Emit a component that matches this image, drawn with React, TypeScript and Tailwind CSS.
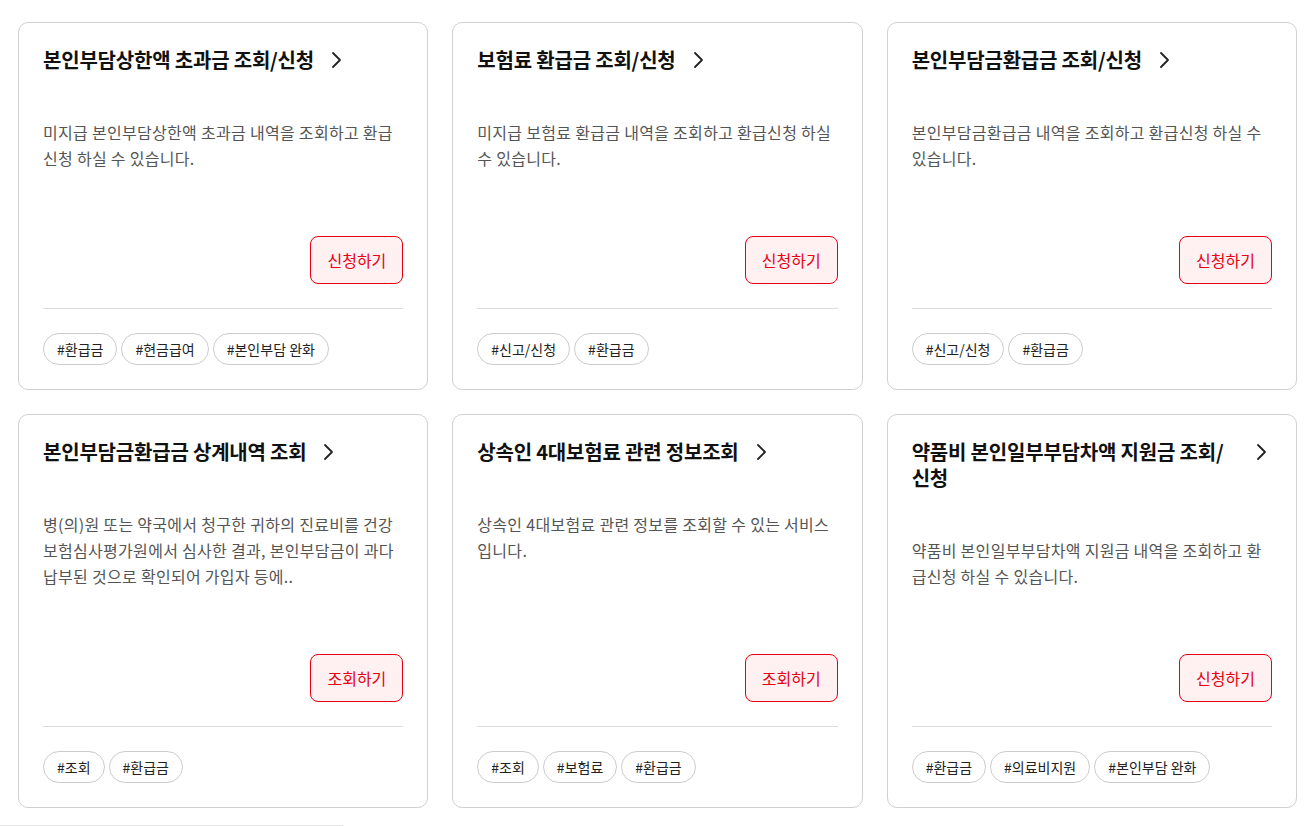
import React from 'react';

type Card = {
  title: string;
  desc: string;
  action: string;
  tags: string[];
};

const cards: Card[] = [
  {
    title: '본인부담상한액 초과금 조회/신청',
    desc: '미지급 본인부담상한액 초과금 내역을 조회하고 환급신청 하실 수 있습니다.',
    action: '신청하기',
    tags: ['#환급금', '#현금급여', '#본인부담 완화'],
  },
  {
    title: '보험료 환급금 조회/신청',
    desc: '미지급 보험료 환급금 내역을 조회하고 환급신청 하실 수 있습니다.',
    action: '신청하기',
    tags: ['#신고/신청', '#환급금'],
  },
  {
    title: '본인부담금환급금 조회/신청',
    desc: '본인부담금환급금 내역을 조회하고 환급신청 하실 수 있습니다.',
    action: '신청하기',
    tags: ['#신고/신청', '#환급금'],
  },
  {
    title: '본인부담금환급금 상계내역 조회',
    desc: '병(의)원 또는 약국에서 청구한 귀하의 진료비를 건강보험심사평가원에서 심사한 결과, 본인부담금이 과다납부된 것으로 확인되어 가입자 등에..',
    action: '조회하기',
    tags: ['#조회', '#환급금'],
  },
  {
    title: '상속인 4대보험료 관련 정보조회',
    desc: '상속인 4대보험료 관련 정보를 조회할 수 있는 서비스입니다.',
    action: '조회하기',
    tags: ['#조회', '#보험료', '#환급금'],
  },
  {
    title: '약품비 본인일부부담차액 지원금 조회/신청',
    desc: '약품비 본인일부부담차액 지원금 내역을 조회하고 환급신청 하실 수 있습니다.',
    action: '신청하기',
    tags: ['#환급금', '#의료비지원', '#본인부담 완화'],
  },
];

function Chevron() {
  return (
    <svg width="12" height="18" viewBox="0 0 12 18" fill="none" className="shrink-0 mt-[4px]">
      <polyline points="3,2 10,9 3,16" stroke="#222" strokeWidth="1.8" strokeLinecap="round" strokeLinejoin="round" />
    </svg>
  );
}

export default function App() {
  return (
    <div
      className="w-[1315px] h-[826px] bg-white overflow-hidden relative"
      style={{ fontFamily: '"Noto Sans CJK KR", "Noto Sans", sans-serif' }}
    >
      <div className="grid grid-cols-3 gap-6 px-[18px] pt-[22px]">
        {cards.map((c, i) => (
          <div key={i} className="flex flex-col border border-[#d0d0d0] rounded-[10px] px-6 pt-6 pb-6">
            {/* title */}
            <div className="flex items-start">
              <h3 className="text-[20px] leading-[26px] font-bold text-[#111] tracking-[-0.2px] max-w-[327px]">{c.title}</h3>
              <span className="ml-4"><Chevron /></span>
            </div>
            <p className="mt-[46px] text-[16px] leading-[26px] text-[#555] tracking-[0.3px]">{c.desc}</p>
            <div className="mt-auto pt-[65px] flex justify-end">
              <button className="h-12 px-4 rounded-lg border border-[#e60012] bg-[#fff0f2] text-[#e60012] text-[16px]">
                {c.action}
              </button>
            </div>
            <div className="mt-6 h-px bg-[#dcdcdc]" />
            <div className="mt-6 flex gap-1">
              {c.tags.map((t) => (
                <span key={t} className="h-8 px-[13px] flex items-center rounded-full border border-[#cccccc] text-[14px] text-[#222]">
                  {t}
                </span>
              ))}
            </div>
          </div>
        ))}
      </div>
      <div className="absolute left-0 bottom-0 w-[343px] h-px bg-[#e6e6e6]" />
    </div>
  );
}
